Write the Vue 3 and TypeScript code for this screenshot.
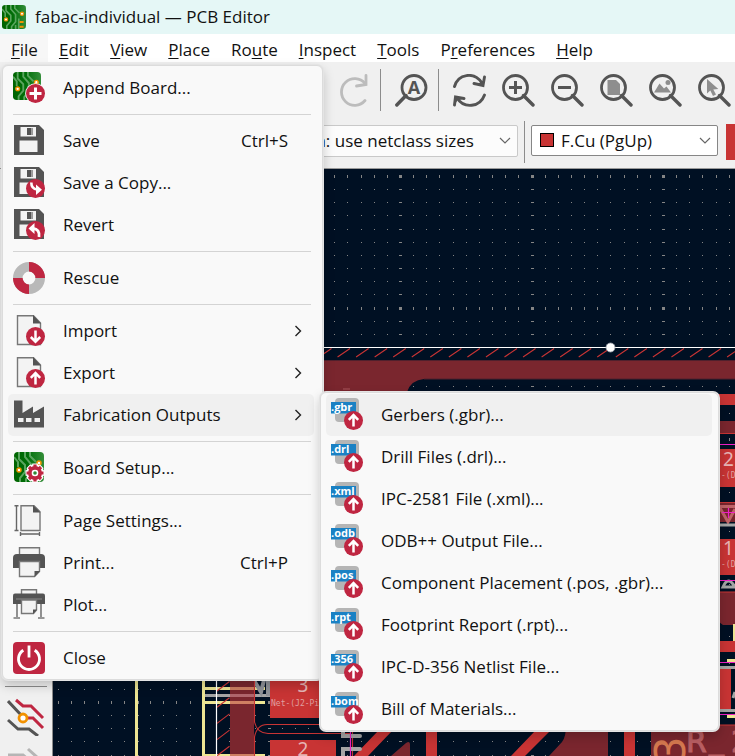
<script setup lang="ts">
interface MenuEntry {
  label: string
  icon: string
  shortcut?: string
  submenu?: boolean
}

const menus = [
  { pre: '', key: 'F', post: 'ile' },
  { pre: '', key: 'E', post: 'dit' },
  { pre: '', key: 'V', post: 'iew' },
  { pre: '', key: 'P', post: 'lace' },
  { pre: 'Ro', key: 'u', post: 'te' },
  { pre: '', key: 'I', post: 'nspect' },
  { pre: '', key: 'T', post: 'ools' },
  { pre: 'P', key: 'r', post: 'eferences' },
  { pre: '', key: 'H', post: 'elp' },
]

const fileMenu: MenuEntry[][] = [
  [{ label: 'Append Board...', icon: 'append' }],
  [
    { label: 'Save', icon: 'save', shortcut: 'Ctrl+S' },
    { label: 'Save a Copy...', icon: 'save-copy' },
    { label: 'Revert', icon: 'revert' },
  ],
  [{ label: 'Rescue', icon: 'rescue' }],
  [
    { label: 'Import', icon: 'import', submenu: true },
    { label: 'Export', icon: 'export', submenu: true },
    { label: 'Fabrication Outputs', icon: 'factory', submenu: true },
  ],
  [{ label: 'Board Setup...', icon: 'setup' }],
  [
    { label: 'Page Settings...', icon: 'page' },
    { label: 'Print...', icon: 'print', shortcut: 'Ctrl+P' },
    { label: 'Plot...', icon: 'plot' },
  ],
  [{ label: 'Close', icon: 'close' }],
]

const outputs = [
  { ext: '.gbr', label: 'Gerbers (.gbr)...' },
  { ext: '.drl', label: 'Drill Files (.drl)...' },
  { ext: '.xml', label: 'IPC-2581 File (.xml)...' },
  { ext: '.odb', label: 'ODB++ Output File...' },
  { ext: '.pos', label: 'Component Placement (.pos, .gbr)...' },
  { ext: '.rpt', label: 'Footprint Report (.rpt)...' },
  { ext: '.356', label: 'IPC-D-356 Netlist File...' },
  { ext: '.bom', label: 'Bill of Materials...' },
]

const zoomTools = [
  { id: 't-refresh', label: 'Refresh' },
  { id: 't-in', label: 'Zoom in' },
  { id: 't-out', label: 'Zoom out' },
  { id: 't-fit', label: 'Zoom to fit' },
  { id: 't-objects', label: 'Zoom to objects' },
  { id: 't-select', label: 'Zoom to selection' },
]

// Grid marks: every tenth row and column is drawn heavier.
const pitch = 13.15
let gridPath = ''
for (let r = -1; r < 100; r++) {
  for (let c = -27; c < 120; c++) {
    const x = Math.round(400 + c * pitch)
    const y = Math.round(176 + r * pitch)
    const w = c % 10 === 0 ? 3 : 1
    const h = r % 10 === 0 ? 3 : 1
    gridPath += `M${x - (w - 1) / 2} ${y - (h - 1) / 2}h${w}v${h}h${-w}z`
  }
}

let hatchPath = ''
for (let i = 0; i < 80; i++) {
  const x = 319 + i * 18.55
  hatchPath += `M${x} 357l12.5 -8.5`
}
for (let i = 0; i < 40; i++) {
  const y = 691 + i * 16.2
  hatchPath += `M217 ${y}l12.5 -9.5`
}
</script>

<template>
  <div class="app">
    <svg class="sprite" aria-hidden="true">
      <defs>
        <linearGradient id="pcb" x1="0" y1="0" x2="1" y2="0">
          <stop offset="0" stop-color="#006400" />
          <stop offset=".45" stop-color="#006e08" />
          <stop offset="1" stop-color="#348e3a" />
        </linearGradient>
        <symbol id="board" viewBox="0 0 30 30">
          <rect width="30" height="30" rx="4" fill="url(#pcb)" />
          <g fill="none" stroke="#5aa55f" stroke-width="2">
            <path d="M5 0v7l6 6v7l-5 6v4M11 0v5l6 7v9l-5 6v3M16 0v4l6 6M0 5l4 5v5M21 30V17M17 30v-5" />
          </g>
          <circle cx="5" cy="18" r="2" fill="#fff" stroke="#f29100" stroke-width="1.500" />
          <circle cx="25" cy="11" r="2" fill="#fff" stroke="#f29100" stroke-width="1.500" />
          <path d="M22 20h5v2.500h-5zM22 26h5v2.500h-5z" fill="#f29100" />
        </symbol>
        <symbol id="disk" viewBox="0 0 32 32">
          <path d="M1 0h25l5 5v25H1z" fill="#545454" />
          <path d="M7.500 2H23v9.500H7.500z" fill="#f3f3f3" />
          <path d="M14 3h4.500v7H14z" fill="#545454" />
          <path d="M18.500 3h1.500v7h-1.500z" fill="#999" />
          <path d="M6.500 15.500h18V27h-18z" fill="#f3f3f3" />
        </symbol>
        <symbol id="sheet" viewBox="0 0 32 32">
          <path d="M4.500 .7H20.500L27.500 8V29.500h-23z" fill="#f3f3f3" stroke="#777" stroke-width="1.4" />
          <path d="M20 0l8 8.500h-8z" fill="#545454" />
        </symbol>
        <symbol id="badge" viewBox="0 0 32 32">
          <circle cx="22.500" cy="21.500" r="9.500" fill="#bf2641" />
        </symbol>
        <symbol id="up" viewBox="0 0 32 32">
          <use href="#badge" />
          <path d="M22.500 27.500V17M17.800 20.800l4.700-4.700 4.700 4.700" fill="none" stroke="#fff" stroke-width="2.500" />
        </symbol>
        <symbol id="append" viewBox="0 0 32 32">
          <use href="#board" width="28" height="28" />
          <circle cx="22.500" cy="21.500" r="10.300" fill="#f9f9f9" />
          <use href="#badge" />
          <path d="M22.500 15.500v12M16.500 21.500h12" stroke="#fff" stroke-width="3" />
        </symbol>
        <symbol id="save" viewBox="0 0 32 32"><use href="#disk" /></symbol>
        <symbol id="save-copy" viewBox="0 0 32 32">
          <use href="#disk" /><use href="#badge" />
          <path d="M18.300 15.500q0 6.500 6 7" fill="none" stroke="#fff" stroke-width="2.600" />
          <path d="M23 17.500l6 5.200-6 5.300z" fill="#fff" />
        </symbol>
        <symbol id="revert" viewBox="0 0 32 32">
          <use href="#disk" /><use href="#badge" />
          <path d="M26 28q1-8-6-8.500" fill="none" stroke="#fff" stroke-width="2.800" />
          <path d="M15.500 19.500l6-5.500v11z" fill="#fff" />
        </symbol>
        <symbol id="rescue" viewBox="0 0 32 32">
          <circle cx="16" cy="16" r="11.200" fill="none" stroke="#b9b9b9" stroke-width="9.600" />
          <path d="M16 4.800A11.200 11.200 0 0 1 27.200 16M16 27.200A11.200 11.200 0 0 1 4.800 16" fill="none" stroke="#bf2641" stroke-width="9.600" />
        </symbol>
        <symbol id="import" viewBox="0 0 32 32">
          <use href="#sheet" /><use href="#badge" />
          <path d="M22.500 15.500V26M17.800 22l4.700 4.700 4.700-4.700" fill="none" stroke="#fff" stroke-width="2.500" />
        </symbol>
        <symbol id="export" viewBox="0 0 32 32"><use href="#sheet" /><use href="#up" /></symbol>
        <symbol id="factory" viewBox="0 0 32 32">
          <path d="M1 1.500h8.500V14l10.500-6.500V14l11-6.500V28.500H1z" fill="#545454" />
          <path d="M5 19h5.500v4H5zM13 19h5.500v4H13zM21.500 19h5.500v4h-5.500z" fill="#f0f0f0" />
        </symbol>
        <symbol id="setup" viewBox="0 0 32 32">
          <use href="#board" x="1" y="0" width="30" height="30" />
          <g fill="none" stroke="#fff">
            <circle cx="22" cy="21" r="6" stroke-width="6" />
            <path d="M22 11.500v19M12.500 21h19M15.300 14.300l13.400 13.400M28.700 14.300L15.300 27.700" stroke-width="5.500" />
          </g>
          <g fill="none" stroke="#bf2641">
            <circle cx="22" cy="21" r="5" stroke-width="4" />
            <path d="M22 12.500v4M22 25.500v4M13.500 21h4M26.500 21h4M16 15l3 3M25 24l3 3M28 15l-3 3M19 24l-3 3" stroke-width="3.200" />
          </g>
          <circle cx="22" cy="21" r="3.300" fill="#fff" />
          <circle cx="22" cy="21" r="1.800" fill="#2f8a35" />
        </symbol>
        <symbol id="page" viewBox="0 0 32 32">
          <path d="M8 .7h13l6 6V25.500H8z" fill="#f3f3f3" stroke="#777" stroke-width="1.400" />
          <path d="M20 0l7.500 7.500H20z" fill="#545454" />
          <path d="M3.500 .5v25.500M1.500 .7h4M1.500 25.500h4M7 29h20M7.500 27v4M26.500 27v4" fill="none" stroke="#666" stroke-width="1.400" />
        </symbol>
        <symbol id="print" viewBox="0 0 32 32">
          <path d="M6.500 .7h20v7h-20z" fill="#f3f3f3" stroke="#777" stroke-width="1.400" />
          <path d="M4 7h24q4 0 4 4v10H0V11q0-4 4-4z" fill="#545454" />
          <path d="M6.500 14.500h20v10l-5 5h-15z" fill="#f3f3f3" stroke="#777" stroke-width="1.400" />
          <path d="M21.500 30v-6H27z" fill="#545454" />
        </symbol>
        <symbol id="plot" viewBox="0 0 32 32">
          <path d="M8.500 .7h15v5h-15z" fill="#f3f3f3" stroke="#777" stroke-width="1.400" />
          <path d="M2 4.500h28q2 0 2 2V15H0V6.500q0-2 2-2z" fill="#545454" />
          <path d="M3 10h26" stroke="#888" />
          <path d="M8.500 11h15v10l-3 3.500h-12z" fill="#f3f3f3" stroke="#777" stroke-width="1.400" />
          <path d="M20 25v-4.500h4z" fill="#545454" />
          <path d="M4 15v13M28 15v13M.5 29h6.500M25 29h6.500" stroke="#777" stroke-width="1.600" />
        </symbol>
        <symbol id="close" viewBox="0 0 32 32">
          <rect width="32" height="32" rx="4" fill="#bf2641" />
          <path d="M10.300 8.200A10.500 10.500 0 1 0 21.700 8.200M16 3.500v12" fill="none" stroke="#fff" stroke-width="2.800" />
        </symbol>
        <symbol id="lens" viewBox="0 0 33 33">
          <circle cx="13.500" cy="13.500" r="12" fill="none" stroke="#545454" stroke-width="2.800" />
          <path d="M21.500 21.500l9.500 9.500" stroke="#545454" stroke-width="3.400" stroke-linecap="round" />
        </symbol>
        <symbol id="t-redo" viewBox="0 0 33 33">
          <path d="M28 26.500A13.300 13.300 0 1 1 28 9.500" fill="none" stroke="#bcbcbc" stroke-width="2.800" stroke-linecap="round" />
          <path d="M29 1.500v9l-9.500 1.500" fill="none" stroke="#bcbcbc" stroke-width="2.800" stroke-linecap="round" />
        </symbol>
        <symbol id="t-find" viewBox="0 0 33 33">
          <circle cx="19" cy="13.500" r="12" fill="none" stroke="#545454" stroke-width="2.800" />
          <path d="M11 21.500L1.800 31" stroke="#545454" stroke-width="3.400" stroke-linecap="round" />
          <text x="19" y="19.500" class="find-letter" text-anchor="middle">A</text>
        </symbol>
        <symbol id="t-refresh" viewBox="0 0 33 33">
          <g fill="none" stroke="#545454" stroke-width="2.900" stroke-linecap="round">
            <path d="M1.500 12.500C5 0 21-3 29 9M31.500 3l-1.500 8.500-9-2" />
            <path d="M31.500 21C27 33.500 11 35 4 24M1.500 31l1-8 8.500 1.500" />
          </g>
          <path d="M31.500 3l-1.500 8.500-9-2 8.500-1zM1.500 31l1-8 8.500 1.500-6 1z" fill="#545454" />
        </symbol>
        <symbol id="t-in" viewBox="0 0 33 33">
          <use href="#lens" /><path d="M13.500 7v13M7 13.500h13" stroke="#545454" stroke-width="3" />
        </symbol>
        <symbol id="t-out" viewBox="0 0 33 33">
          <use href="#lens" /><path d="M7 13.500h13" stroke="#545454" stroke-width="3" />
        </symbol>
        <symbol id="t-fit" viewBox="0 0 33 33">
          <use href="#lens" /><path d="M7.500 6h8.500l4 4v11H7.500z" fill="#8e8e8e" />
        </symbol>
        <symbol id="t-objects" viewBox="0 0 33 33">
          <use href="#lens" />
          <path d="M5 18.500l5.500-9 4.500 5 2.500-2 4.500 6z" fill="#8e8e8e" />
          <circle cx="19" cy="8.500" r="2.500" fill="#8e8e8e" />
        </symbol>
        <symbol id="t-select" viewBox="0 0 33 33">
          <use href="#lens" />
          <path d="M9 5v14.500l3.300-3 2.700 5.500 3-1.500-2.700-5 5-.5z" fill="#8e8e8e" />
        </symbol>
        <symbol id="tracks" viewBox="0 0 38 38">
          <g fill="none" stroke-width="3">
            <path d="M9 2l7 6h8l12 12M18 20h8l10 10" stroke="#bf2641" />
            <path d="M1 3l14 15M1 22l10 9h11l9 7" stroke="#545454" />
          </g>
          <circle cx="16" cy="20" r="4" fill="#fff" stroke="#f29100" stroke-width="2.800" />
        </symbol>
        <symbol id="tracks-off" viewBox="0 0 38 38">
          <path d="M1 8h15l14 12M21 2l10 9" fill="none" stroke="#b5b5b5" stroke-width="3" />
        </symbol>
      </defs>
    </svg>

    <header class="titlebar">
      <svg class="logo" aria-hidden="true"><use href="#board" width="24" height="24" /></svg>
      <span>fabac-individual — PCB Editor</span>
    </header>

    <nav class="menubar">
      <button v-for="(m, i) in menus" :key="m.key + i" type="button" :class="{ open: i === 0 }">{{ m.pre }}<span class="mnemonic">{{ m.key }}</span>{{ m.post }}</button>
    </nav>

    <section class="toolbar main-tools">
      <button type="button" aria-label="Redo" disabled><svg class="tool"><use href="#t-redo" /></svg></button>
      <i class="divider"></i>
      <button type="button" aria-label="Find"><svg class="tool"><use href="#t-find" /></svg></button>
      <i class="divider"></i>
      <div class="group">
        <button v-for="t in zoomTools" :key="t.id" type="button" :aria-label="t.label">
          <svg class="tool"><use :href="'#' + t.id" /></svg>
        </button>
      </div>
    </section>

    <section class="toolbar options">
      <label class="combo via">
        <select aria-label="Via size"><option>Via: use netclass sizes</option></select>
        <svg class="arrow" viewBox="0 0 12 8"><path d="M1 1l5 5 5-5" /></svg>
      </label>
      <i class="divider"></i>
      <label class="combo layer">
        <i class="swatch"></i>
        <select aria-label="Layer"><option>F.Cu (PgUp)</option></select>
        <svg class="arrow" viewBox="0 0 12 8"><path d="M1 1l5 5 5-5" /></svg>
      </label>
      <i class="layer-pair"></i>
    </section>

    <main class="workspace">
      <aside class="sidebar">
        <hr>
        <button type="button" aria-label="Show ratsnest"><svg class="side-icon"><use href="#tracks" /></svg></button>
        <button type="button" aria-label="Curved ratsnest" disabled><svg class="side-icon"><use href="#tracks-off" /></svg></button>
      </aside>
      <div class="board">
        <svg class="drawing" viewBox="53 169 682 587" preserveAspectRatio="xMinYMin slice" role="img" aria-label="Board layout">
          <path :d="gridPath" fill="#858585" shape-rendering="crispEdges" />
          <!-- silkscreen and courtyard on the left edge -->
          <g fill="#ede593">
            <path d="M135 600h3v156h-3zM202 600h3v156h-3zM205 687h60v3h-60zM205 701h60v3h-60zM205 754h60v2h-60z" />
          </g>
          <path d="M205 694h65v3h-65z" fill="#a5a5a5" />
          <path d="M246 680l4 10 5-8 6 10 3-12M268 680v16" fill="none" stroke="#8f9298" stroke-width="4" />
          <!-- copper zones -->
          <path d="M230 361H735V379H424Q411 380 407 392V420H254V756H230z" fill="#7a262e" />
          <path d="M324 360.500H735M424 379H735" stroke="#50202c" fill="none" />
          <path d="M343 389h7" stroke="#a8555b" />
          <path d="M230 687h24v3h-24zM230 701h24v3h-24zM230 754h24v2h-24z" fill="#cf7f62" />
          <path d="M230 694h24v3h-24z" fill="#b0666d" />
          <path d="M549 756L562 742Q566 737 566 725H608V756zM391 756l15-13q4-3 4 2v11zM651 725H735V756H651z" fill="#7a262e" />
          <path :d="hatchPath" stroke="#c83434" stroke-width="1.100" />
          <!-- board outline -->
          <path d="M216.500 756V347.500H735" fill="none" stroke="#fff" stroke-width="1.200" />
          <circle cx="610.500" cy="347.500" r="4.500" fill="#fff" stroke="#9aa0a8" stroke-width=".8" />
          <!-- tracks and pads -->
          <g fill="none" stroke="#c83434" stroke-width="1.100">
            <path d="M254.500 600V722Q257 733 268 733.500H350M254.500 756V737Q257 724 268 724.500H330" />
            <path d="M352.500 731V756" />
          </g>
          <g fill="#c83434">
            <path d="M270 660h60v58h-60zM270 740h66v16h-66zM378 731h14l-24 25h-14zM426 725h11v31h-11zM535 731h15l-25 25h-14zM624 725h11v31h-11z" />
            <path d="M715 394h20v11h-20zM715 449h20v38h-20zM715 539h20v36h-20zM715 641h20v11h-20zM715 668h16v42h-16z" />
          </g>
          <path d="M715 421h20v13h-20zM715 502h20v20h-20zM715 592h20v33h-12l-8-6z" fill="#7a262e" />
          <path d="M715 433.500h20M715 502.500h20M715 592h20M651 725h84" stroke="#c83434" />
          <path d="M715 506.500h20M720 508l8 14 7-13" stroke="#c06468" stroke-width="3" fill="none" />
          <g fill="none" stroke="#a5a5a5" stroke-width="3">
            <path d="M715 525h20M723 587q5-12 12 0z" />
            <path d="M720 667.500h15M720 710.500h15M733 698l2-6" />
            <path d="M343 731v5h17M343 756v-7h17" stroke-width="4" stroke-linecap="round" />
          </g>
          <path d="M733 624h2v17h-2zM727 659h8v3h-8zM727 715h8v3h-8z" fill="#ede593" />
          <path d="M350.500 725V756M715 444.500h20M715 580.500h20M715 662.500h20M715 714.500h20M728.500 508v10M722 512.500h13" stroke="#f01fc8" stroke-width="1.200" fill="none" />
          <g class="pad-name" text-anchor="middle">
            <text x="303" y="692">3</text>
            <text x="303" y="756">2</text>
            <text x="728.500" y="466">2</text>
            <text x="728.500" y="555">1</text>
          </g>
          <g class="net-name">
            <text x="271" y="706">Net-(J2-Pin</text>
            <text x="721" y="478">-(D1</text>
            <text x="721" y="567">-(D1</text>
          </g>
          <g class="ref">
            <text x="686" y="752">R</text>
            <text x="709" y="750">_</text>
            <text x="731" y="752">2</text>
          </g>
          <text class="rotated-ref" transform="translate(685 763) rotate(-90)">3</text>
        </svg>
      </div>
    </main>

    <div class="menu file-menu" role="menu" aria-label="File">
      <div v-for="(section, s) in fileMenu" :key="s" class="section">
        <button v-for="item in section" :key="item.label" type="button" role="menuitem" class="row" :class="{ active: item.icon === 'factory' }">
          <svg class="icon" aria-hidden="true"><use :href="'#' + item.icon" /></svg>
          <span class="label">{{ item.label }}</span>
          <span v-if="item.shortcut" class="shortcut">{{ item.shortcut }}</span>
          <svg v-if="item.submenu" class="chevron" viewBox="0 0 8 12" aria-hidden="true"><path d="M1.500 1l5 5-5 5" /></svg>
        </button>
      </div>
    </div>

    <div class="menu output-menu" role="menu" aria-label="Fabrication Outputs">
      <button v-for="(o, i) in outputs" :key="o.ext" type="button" role="menuitem" class="row" :class="{ active: i === 0 }">
        <svg class="icon" viewBox="0 0 32 32" aria-hidden="true">
          <rect x="4" y="-1" width="24" height="24" rx="4" fill="#b5b5b5" />
          <path d="M0 3h25v11.500H0z" fill="#1a81c4" />
          <text class="ext" x="0" y="12">{{ o.ext }}</text>
          <use href="#up" width="32" height="32" />
        </svg>
        <span class="label">{{ o.label }}</span>
      </button>
    </div>
  </div>
</template>

<style>
body {
  margin: 0;
  overflow: hidden;
}
</style>

<style scoped>
.app {
  position: relative;
  display: flex;
  flex-direction: column;
  height: 100vh;
  overflow: hidden;
  background: #f0f0f0;
  color: #111;
  font-family: "Open Sans", "Noto Sans", sans-serif;
  font-size: 17px;
  line-height: 24px;
}
button {
  border: 0;
  padding: 0;
  background: none;
  color: inherit;
  font: inherit;
}
.sprite {
  position: absolute;
  width: 0;
  height: 0;
}
.titlebar {
  display: flex;
  align-items: center;
  gap: 9px;
  height: 34px;
  padding-left: 2px;
  background: #e5f7f6;
  flex: none;
}
.logo {
  width: 24px;
  height: 24px;
}
.menubar {
  display: flex;
  height: 28px;
  background: #fff;
  flex: none;
}
.menubar button {
  padding: 4px 10px 0 11px;
  white-space: nowrap;
}
.menubar .open {
  background: #f7f7f7;
}
.mnemonic {
  text-decoration: underline;
  text-decoration-thickness: 1px;
  text-underline-offset: 2px;
}
.toolbar {
  display: flex;
  align-items: center;
  flex: none;
}
.main-tools {
  height: 56px;
  padding-left: 337px;
}
.tool {
  display: block;
  width: 33px;
  height: 33px;
}
.group {
  display: flex;
  gap: 16px;
}
.divider {
  width: 1px;
  height: 42px;
  background: #8c8c8c;
  flex: none;
}
.main-tools .divider {
  margin: 0 14px 0 10px;
}
.find-letter {
  font: bold 18px "Open Sans", sans-serif;
  fill: #545454;
}
.options {
  height: 50px;
  padding-left: 289px;
  align-items: flex-start;
  gap: 6px;
}
.options .divider {
  margin-top: 3px;
}
.combo {
  position: relative;
  display: flex;
  margin-top: 7px;
}
.combo select {
  appearance: none;
  width: 100%;
  height: 32px;
  padding: 0 12px;
  border: 1px solid #c9c9c9;
  border-radius: 2px;
  background: #fcfcfc;
  color: #111;
  font: inherit;
}
.via {
  width: 229px;
}
.layer {
  width: 187px;
}
.layer select {
  height: 31px;
  padding-left: 29px;
  border-color: #868686;
  background: #fff;
}
.arrow {
  position: absolute;
  right: 7px;
  top: 12px;
  width: 12px;
  height: 8px;
  fill: none;
  stroke: #666;
  stroke-width: 1.2;
}
.swatch {
  position: absolute;
  left: 9px;
  top: 8px;
  width: 12px;
  height: 12px;
  border: 1px solid #000;
  background: #c83434;
}
.layer-pair {
  flex: 1;
  height: 36px;
  margin: 6px 0 0 2px;
  background: #c83434;
}
.workspace {
  display: flex;
  flex: 1;
  min-height: 0;
  border-top: 1px solid #9a9a9a;
}
.sidebar {
  display: flex;
  flex-direction: column;
  align-items: center;
  gap: 11px;
  width: 52px;
  padding-top: 517px;
  border-right: 1px solid #8c8c8c;
  flex: none;
}
.sidebar > * {
  flex: none;
}
.sidebar hr {
  width: 42px;
  height: 1px;
  margin: 0;
  border: 0;
  background: #8c8c8c;
}
.side-icon {
  display: block;
  width: 38px;
  height: 38px;
}
.board {
  flex: 1;
  min-width: 0;
  background: #001023;
}
.drawing {
  display: block;
  width: 100%;
  height: 100%;
}
.pad-name {
  font: 19px "Noto Sans", sans-serif;
  fill: #e6b4b4;
}
.net-name {
  font: 8px "DejaVu Sans Mono", monospace;
  fill: #e0a0a0;
}
.ref {
  font: 30px "DejaVu Sans", sans-serif;
  fill: #b95f63;
  stroke: #b95f63;
}
.rotated-ref {
  font: 42px "DejaVu Sans", sans-serif;
  fill: #d5784f;
}
.menu {
  position: absolute;
  box-sizing: border-box;
  border: 1px solid #dcdcdc;
  border-radius: 6px;
  background: #f9f9f9;
  box-shadow: 0 0 0 1px #e4e4e4, 0 5px 12px rgba(0, 0, 0, 0.22);
}
.file-menu {
  left: 2px;
  top: 65px;
  width: 321px;
  padding: 1px 8px 0 5px;
}
.output-menu {
  left: 320px;
  top: 392px;
  width: 399px;
  padding: 1px 6px 0 5px;
}
.section + .section {
  position: relative;
  margin-top: 5px;
  padding-top: 6px;
}
.section + .section::before {
  content: "";
  position: absolute;
  left: 5px;
  right: 3px;
  top: 0;
  height: 1px;
  background: #d4d4d4;
}
.row {
  display: flex;
  align-items: center;
  width: 100%;
  height: 42px;
  padding: 0 12px 0 5px;
  border-radius: 5px;
  text-align: left;
  white-space: nowrap;
}
.row.active {
  background: #f0f0f0;
}
.icon {
  width: 32px;
  height: 32px;
  margin-right: 18px;
  overflow: visible;
  flex: none;
}
.label {
  flex: 1;
}
.shortcut {
  margin-right: 14px;
}
.chevron {
  width: 8px;
  height: 12px;
  fill: none;
  stroke: #222;
  stroke-width: 1.4;
}
.ext {
  font: bold 11px "Open Sans", sans-serif;
  fill: #fff;
}
</style>
